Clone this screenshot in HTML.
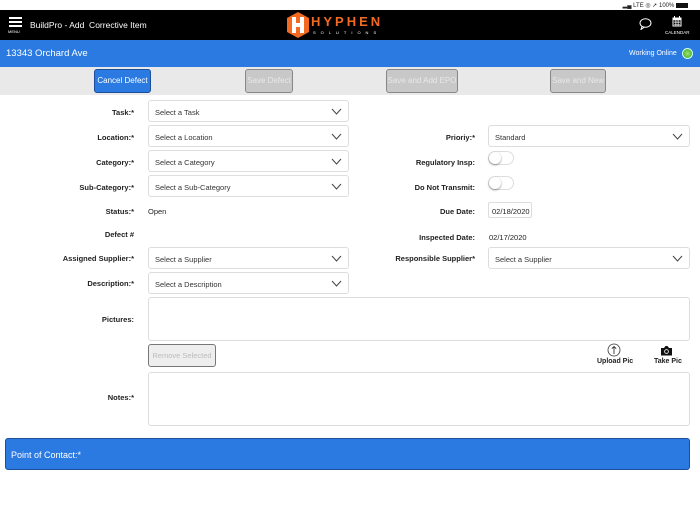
<!DOCTYPE html>
<html><head><style>
*{margin:0;padding:0;box-sizing:border-box}
body{width:700px;height:525px;background:#fff;font-family:"Liberation Sans",sans-serif;position:relative;overflow:hidden;font-size:8px;color:#222}
.a{position:absolute}
.lbl{position:absolute;right:566px;font-weight:bold;font-size:7.5px;color:#222;text-align:right;white-space:nowrap}
.rl{position:absolute;right:225px;font-weight:bold;font-size:7.5px;color:#222;text-align:right;white-space:nowrap}
.sel{position:absolute;height:22px;border:1px solid #ddd;border-radius:3px;background:#fff;font-size:7.5px;padding:7px 0 0 6px;color:#333}
.sel svg{position:absolute;right:6px;top:7px}
.btn{position:absolute;top:69px;height:24px;border:1px solid #888;border-radius:3px;background:#c8c8c8;color:#e8e8e8;font-size:8px;text-align:center;line-height:22px}
.tog{position:absolute;width:26px;height:14px;border:1px solid #ddd;border-radius:8px;background:#fff}
.tog:after{content:"";position:absolute;left:0;top:0;width:12px;height:12px;border-radius:50%;background:#fff;box-shadow:0 1px 2px rgba(0,0,0,.4)}
</style></head><body>
<div class="a" style="right:12px;top:2px;font-size:6px;color:#222">▂▄ LTE ◎ ➚ 100% <span style="display:inline-block;width:12px;height:5px;background:#111;vertical-align:middle"></span></div>
<div class="a" style="left:0;top:10px;width:700px;height:30px;background:#000"></div>
<div class="a" style="left:9px;top:17px;width:13px;height:2px;background:#fff;box-shadow:0 4px 0 #fff,0 8px 0 #fff"></div>
<div class="a" style="left:8px;top:29px;color:#fff;font-size:4px">MENU</div>
<div class="a" style="left:30px;top:20px;color:#fff;font-size:8.5px">BuildPro - Add&nbsp; Corrective Item</div>
<svg class="a" style="left:287px;top:12px" width="22" height="26" viewBox="0 0 22 26"><path d="M11 0 L22 6 V20 L11 26 L0 20 V6Z" fill="#f26a21"/><rect x="5" y="5" width="4" height="16" fill="#fff"/><rect x="13" y="5" width="4" height="16" fill="#fff"/><rect x="5" y="11" width="12" height="4" fill="#fff"/></svg>
<div class="a" style="left:311px;top:14px;color:#f26a21;font-weight:bold;font-size:13px;letter-spacing:3px">HYPHEN</div>
<div class="a" style="left:313px;top:30px;color:#fff;font-size:4px;letter-spacing:5px">SOLUTIONS</div>
<svg class="a" style="left:639px;top:18px" width="13" height="12" viewBox="0 0 13 12"><ellipse cx="6.5" cy="5" rx="5.5" ry="4.3" fill="none" stroke="#fff" stroke-width="1"/><path d="M3 8.5 L2 11.5 L5.5 9" fill="none" stroke="#fff" stroke-width="1"/></svg>
<svg class="a" style="left:672px;top:16px" width="10" height="11" viewBox="0 0 10 11"><rect x="0.5" y="1.5" width="9" height="9" fill="#fff"/><rect x="1.5" y="4" width="7" height="5.5" fill="#000"/><path d="M2 5h6M2 6.7h6M2 8.3h6M3.5 4v6M5 4v6M6.5 4v6" stroke="#fff" stroke-width=".5"/><rect x="2" y="0" width="1" height="2" fill="#fff"/><rect x="7" y="0" width="1" height="2" fill="#fff"/></svg>
<div class="a" style="left:665px;top:30px;color:#fff;font-size:4.5px">CALENDAR</div>
<div class="a" style="left:0;top:40px;width:700px;height:27px;background:#2a7ae2"></div>
<div class="a" style="left:6px;top:48px;color:#fff;font-size:9.5px">13343 Orchard Ave</div>
<div class="a" style="left:629px;top:50px;color:#fff;font-size:7px">Working Online</div>
<div class="a" style="left:682px;top:48px;width:11px;height:11px;border-radius:50%;background:radial-gradient(#9be86b,#3a9a22);border:1px solid #cfe"></div>
<div class="a" style="left:0;top:67px;width:700px;height:28px;background:#e9e9e9"></div>
<div class="btn" style="left:94px;width:57px;background:#2a7ae2;color:#fff;border-color:#1b4f9a">Cancel Defect</div>
<div class="btn" style="left:245px;width:48px">Save Defect</div>
<div class="btn" style="left:386px;width:72px">Save and Add EPO</div>
<div class="btn" style="left:550px;width:56px">Save and New</div>

<div class="lbl" style="top:108px">Task:*</div>
<div class="sel" style="left:148px;top:100px;width:201px">Select a Task<svg width="11" height="7"><path d="M1 1l4.5 5 4.5-5" stroke="#444" fill="none"/></svg></div>
<div class="lbl" style="top:133px">Location:*</div>
<div class="sel" style="left:148px;top:125px;width:201px">Select a Location<svg width="11" height="7"><path d="M1 1l4.5 5 4.5-5" stroke="#444" fill="none"/></svg></div>
<div class="lbl" style="top:158px">Category:*</div>
<div class="sel" style="left:148px;top:150px;width:201px">Select a Category<svg width="11" height="7"><path d="M1 1l4.5 5 4.5-5" stroke="#444" fill="none"/></svg></div>
<div class="lbl" style="top:183px">Sub-Category:*</div>
<div class="sel" style="left:148px;top:175px;width:201px">Select a Sub-Category<svg width="11" height="7"><path d="M1 1l4.5 5 4.5-5" stroke="#444" fill="none"/></svg></div>
<div class="lbl" style="top:207px">Status:*</div>
<div class="a" style="left:148px;top:207px;font-size:7.5px">Open</div>
<div class="lbl" style="top:230px">Defect #</div>
<div class="lbl" style="top:254px">Assigned Supplier:*</div>
<div class="sel" style="left:148px;top:247px;width:201px">Select a Supplier<svg width="11" height="7"><path d="M1 1l4.5 5 4.5-5" stroke="#444" fill="none"/></svg></div>
<div class="lbl" style="top:279px">Description:*</div>
<div class="sel" style="left:148px;top:272px;width:201px">Select a Description<svg width="11" height="7"><path d="M1 1l4.5 5 4.5-5" stroke="#444" fill="none"/></svg></div>
<div class="lbl" style="top:315px">Pictures:</div>
<div class="a" style="left:148px;top:297px;width:542px;height:44px;border:1px solid #ddd;border-radius:3px"></div>
<div class="a" style="left:148px;top:344px;width:68px;height:23px;border:1px solid #777;border-radius:3px;background:#eee;color:#bbb;font-size:7.5px;text-align:center;line-height:21px">Remove Selected</div>
<div class="lbl" style="top:393px">Notes:*</div>
<div class="a" style="left:148px;top:372px;width:542px;height:54px;border:1px solid #ddd;border-radius:3px"></div>

<div class="rl" style="top:133px">Prioriy:*</div>
<div class="sel" style="left:488px;top:125px;width:202px">Standard<svg width="11" height="7"><path d="M1 1l4.5 5 4.5-5" stroke="#444" fill="none"/></svg></div>
<div class="rl" style="top:158px">Regulatory Insp:</div>
<div class="tog" style="left:488px;top:151px"></div>
<div class="rl" style="top:183px">Do Not Transmit:</div>
<div class="tog" style="left:488px;top:176px"></div>
<div class="rl" style="top:207px">Due Date:</div>
<div class="a" style="left:488px;top:202px;width:44px;height:16px;border:1px solid #ddd;border-radius:2px;font-size:7.5px;padding:4px 0 0 3px">02/18/2020</div>
<div class="rl" style="top:233px">Inspected Date:</div>
<div class="a" style="left:489px;top:233px;font-size:7.5px">02/17/2020</div>
<div class="rl" style="top:254px">Responsible Supplier*</div>
<div class="sel" style="left:488px;top:247px;width:202px">Select a Supplier<svg width="11" height="7"><path d="M1 1l4.5 5 4.5-5" stroke="#444" fill="none"/></svg></div>

<svg class="a" style="left:607px;top:343px" width="14" height="14" viewBox="0 0 14 14"><circle cx="7" cy="7" r="6" fill="none" stroke="#333" stroke-width=".8"/><path d="M7 11V3.5M4.8 5.7L7 3.5l2.2 2.2" fill="none" stroke="#333" stroke-width=".9"/></svg>
<div class="a" style="left:597px;top:358px;font-size:7px;font-weight:bold">Upload Pic</div>
<svg class="a" style="left:660px;top:345px" width="13" height="11" viewBox="0 0 13 11"><path d="M1 3h3l1.5-2h2L9 3h3v7.5H1z" fill="#111"/><circle cx="6.5" cy="6.5" r="2.3" fill="#fff"/><circle cx="6.5" cy="6.5" r="1.5" fill="#111"/></svg>
<div class="a" style="left:654px;top:358px;font-size:7px;font-weight:bold">Take Pic</div>

<div class="a" style="left:5px;top:438px;width:685px;height:32px;background:#2a7ae2;border:1px solid #1b4f9a;border-radius:3px"></div>
<div class="a" style="left:11px;top:450px;color:#fff;font-size:9px">Point of Contact:*</div>
</body></html>
